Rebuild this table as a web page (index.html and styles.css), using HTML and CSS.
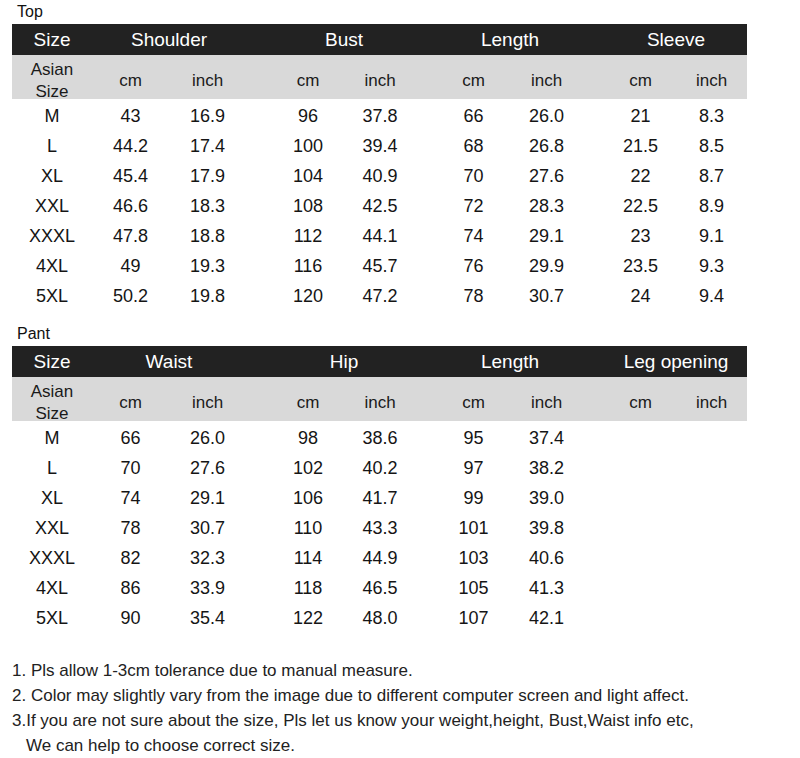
FILE: index.html
```html
<!DOCTYPE html>
<html>
<head>
<meta charset="utf-8">
<link rel="stylesheet" href="styles.css">
</head>
<body>
<div class="page">
  <div class="label">Top</div>
  <div class="table">
    <div class="row head">
      <div class="c1">Size</div>
      <div class="grp g1">Shoulder</div>
      <div class="grp g2">Bust</div>
      <div class="grp g3">Length</div>
      <div class="grp g4">Sleeve</div>
    </div>
    <div class="row sub">
      <div class="c1 asian">Asian<br>Size</div>
      <div class="k2">cm</div><div class="k3">inch</div>
      <div class="k5">cm</div><div class="k6">inch</div>
      <div class="k8">cm</div><div class="k9">inch</div>
      <div class="k11">cm</div><div class="k12">inch</div>
    </div>
    <div class="body">
      <div class="row data"><div class="c1">M</div><div class="k2">43</div><div class="k3">16.9</div><div class="k5">96</div><div class="k6">37.8</div><div class="k8">66</div><div class="k9">26.0</div><div class="k11">21</div><div class="k12">8.3</div></div>
      <div class="row data"><div class="c1">L</div><div class="k2">44.2</div><div class="k3">17.4</div><div class="k5">100</div><div class="k6">39.4</div><div class="k8">68</div><div class="k9">26.8</div><div class="k11">21.5</div><div class="k12">8.5</div></div>
      <div class="row data"><div class="c1">XL</div><div class="k2">45.4</div><div class="k3">17.9</div><div class="k5">104</div><div class="k6">40.9</div><div class="k8">70</div><div class="k9">27.6</div><div class="k11">22</div><div class="k12">8.7</div></div>
      <div class="row data"><div class="c1">XXL</div><div class="k2">46.6</div><div class="k3">18.3</div><div class="k5">108</div><div class="k6">42.5</div><div class="k8">72</div><div class="k9">28.3</div><div class="k11">22.5</div><div class="k12">8.9</div></div>
      <div class="row data"><div class="c1">XXXL</div><div class="k2">47.8</div><div class="k3">18.8</div><div class="k5">112</div><div class="k6">44.1</div><div class="k8">74</div><div class="k9">29.1</div><div class="k11">23</div><div class="k12">9.1</div></div>
      <div class="row data"><div class="c1">4XL</div><div class="k2">49</div><div class="k3">19.3</div><div class="k5">116</div><div class="k6">45.7</div><div class="k8">76</div><div class="k9">29.9</div><div class="k11">23.5</div><div class="k12">9.3</div></div>
      <div class="row data"><div class="c1">5XL</div><div class="k2">50.2</div><div class="k3">19.8</div><div class="k5">120</div><div class="k6">47.2</div><div class="k8">78</div><div class="k9">30.7</div><div class="k11">24</div><div class="k12">9.4</div></div>
    </div>
  </div>

  <div class="label second">Pant</div>
  <div class="table">
    <div class="row head">
      <div class="c1">Size</div>
      <div class="grp g1">Waist</div>
      <div class="grp g2">Hip</div>
      <div class="grp g3">Length</div>
      <div class="grp g4">Leg opening</div>
    </div>
    <div class="row sub">
      <div class="c1 asian">Asian<br>Size</div>
      <div class="k2">cm</div><div class="k3">inch</div>
      <div class="k5">cm</div><div class="k6">inch</div>
      <div class="k8">cm</div><div class="k9">inch</div>
      <div class="k11">cm</div><div class="k12">inch</div>
    </div>
    <div class="body">
      <div class="row data"><div class="c1">M</div><div class="k2">66</div><div class="k3">26.0</div><div class="k5">98</div><div class="k6">38.6</div><div class="k8">95</div><div class="k9">37.4</div></div>
      <div class="row data"><div class="c1">L</div><div class="k2">70</div><div class="k3">27.6</div><div class="k5">102</div><div class="k6">40.2</div><div class="k8">97</div><div class="k9">38.2</div></div>
      <div class="row data"><div class="c1">XL</div><div class="k2">74</div><div class="k3">29.1</div><div class="k5">106</div><div class="k6">41.7</div><div class="k8">99</div><div class="k9">39.0</div></div>
      <div class="row data"><div class="c1">XXL</div><div class="k2">78</div><div class="k3">30.7</div><div class="k5">110</div><div class="k6">43.3</div><div class="k8">101</div><div class="k9">39.8</div></div>
      <div class="row data"><div class="c1">XXXL</div><div class="k2">82</div><div class="k3">32.3</div><div class="k5">114</div><div class="k6">44.9</div><div class="k8">103</div><div class="k9">40.6</div></div>
      <div class="row data"><div class="c1">4XL</div><div class="k2">86</div><div class="k3">33.9</div><div class="k5">118</div><div class="k6">46.5</div><div class="k8">105</div><div class="k9">41.3</div></div>
      <div class="row data"><div class="c1">5XL</div><div class="k2">90</div><div class="k3">35.4</div><div class="k5">122</div><div class="k6">48.0</div><div class="k8">107</div><div class="k9">42.1</div></div>
    </div>
  </div>

  <div class="notes">
    <p>1. Pls allow 1-3cm tolerance due to manual measure.</p>
    <p>2. Color may slightly vary from the image due to different computer screen and light affect.</p>
    <p>3.If you are not sure about the size, Pls let us know your weight,height, Bust,Waist info etc,</p>
    <p class="indent">We can help to choose correct size.</p>
  </div>
</div>
</body>
</html>
```

FILE: styles.css
```css
html, body {
  margin: 0;
  padding: 0;
  background: #ffffff;
}
body {
  font-family: "Liberation Sans", Arial, sans-serif;
  color: #151515;
}
.page {
  padding: 0 0 0 12px;
}
.label {
  height: 24px;
  line-height: 24px;
  font-size: 16px;
  padding-left: 5px;
  color: #111;
}
.label.second {
  margin-top: 11px;
}
.table {
  width: 735px;
}
.row {
  display: grid;
  grid-template-columns: 80px 77px 77px 26px 72px 72px 21px 73px 73px 22px 71px 71px;
  text-align: center;
}
.head {
  height: 31px;
  line-height: 31px;
  background: #222222;
  color: #ffffff;
  font-size: 19px;
}
.sub {
  box-sizing: border-box;
  height: 44px;
  padding-top: 4px;
  background: #d9d9d9;
  font-size: 17px;
  align-items: center;
  color: #1a1a1a;
}
.asian {
  line-height: 22px;
}
.body {
  padding-top: 2px;
}
.data {
  height: 30px;
  line-height: 30px;
  font-size: 18px;
}
.c1 { grid-column: 1; }
.g1 { grid-column: 2 / span 2; }
.g2 { grid-column: 5 / span 2; }
.g3 { grid-column: 8 / span 2; }
.g4 { grid-column: 11 / span 2; }
.k2 { grid-column: 2; }
.k3 { grid-column: 3; }
.k5 { grid-column: 5; }
.k6 { grid-column: 6; }
.k8 { grid-column: 8; }
.k9 { grid-column: 9; }
.k11 { grid-column: 11; }
.k12 { grid-column: 12; }
.notes {
  margin-top: 25px;
  font-size: 17px;
  color: #222;
}
.notes p {
  margin: 0;
  height: 25px;
  line-height: 25px;
}
.notes .indent {
  padding-left: 14px;
}
```
